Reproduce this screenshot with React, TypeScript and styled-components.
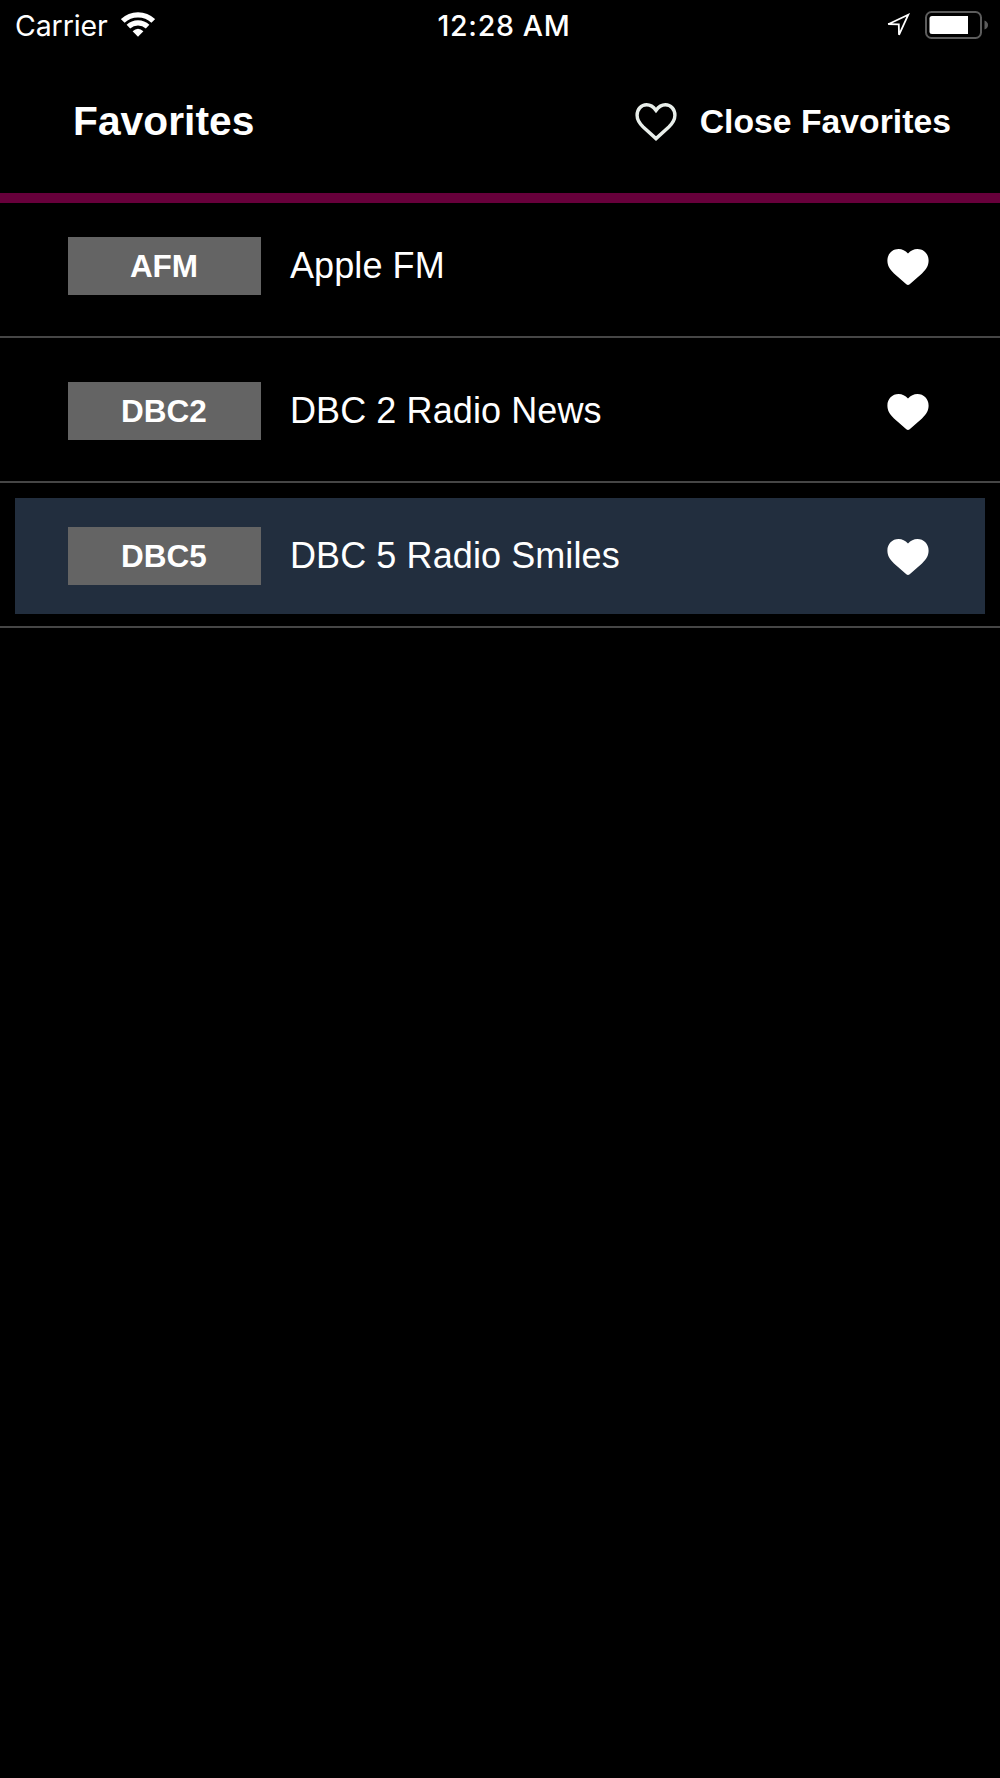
import React from "react";
import styled, { createGlobalStyle } from "styled-components";

const GlobalStyle = createGlobalStyle`
  *, *::before, *::after { box-sizing: border-box; }
  html, body { margin: 0; padding: 0; background: #000; }
`;

const Screen = styled.div`
  display: flex;
  flex-direction: column;
  width: 1000px;
  height: 1778px;
  overflow: hidden;
  background: #000;
  color: #fff;
  font-family: "Liberation Sans", Arial, sans-serif;
`;

const StatusBar = styled.div`
  display: grid;
  grid-template-columns: 1fr auto 1fr;
  align-items: center;
  height: 50px;
  padding: 0 12px 0 15px;
  font-family: Inter, Roboto, sans-serif;
`;

const StatusGroup = styled.div<{ $end?: boolean }>`
  display: flex;
  align-items: center;
  gap: ${(p) => (p.$end ? "14px" : "13px")};
  justify-content: ${(p) => (p.$end ? "flex-end" : "flex-start")};
  svg { display: block; margin-bottom: 2px; }
`;

const Carrier = styled.span`
  width: 93px;
  padding-top: 1px;
  font-size: 28.5px;
  font-weight: 400;
  line-height: 50px;
  letter-spacing: -0.1px;
`;

const Clock = styled.span`
  margin-left: 5px;
  padding-top: 1px;
  font-size: 28.5px;
  font-weight: 500;
  line-height: 50px;
  letter-spacing: 0.7px;
`;

const Header = styled.header`
  position: relative;
  display: flex;
  align-items: center;
  justify-content: space-between;
  height: 153px;
  padding: 0 49px 0 73px;
  border-bottom: 10px solid #67003b;
`;

const Title = styled.h1`
  margin: 0;
  font-size: 40.7px;
  font-weight: 700;
  line-height: 143px;
  letter-spacing: 0.06px;
`;

const CloseButton = styled.button`
  display: flex;
  align-items: center;
  gap: 23px;
  padding: 0;
  border: 0;
  background: none;
  color: inherit;
  font: 700 33.7px/143px "Liberation Sans", Arial, sans-serif;
  letter-spacing: 0.03px;
  svg { display: block; margin-top: 1px; }
`;

const List = styled.ul`
  margin: -10px 0 0;
  padding: 0;
  list-style: none;
`;

const Row = styled.li`
  height: 145px;
  padding: 15px 15px 12px;
  border-bottom: 2px solid #464646;
`;

const RowBody = styled.div<{ $active?: boolean }>`
  display: flex;
  align-items: center;
  height: 116px;
  padding: 0 56px 0 53px;
  background: ${(p) => (p.$active ? "#222e3e" : "transparent")};
  svg { display: block; margin-top: 1px; }
`;

const Badge = styled.span`
  width: 193px;
  height: 58px;
  padding-right: 1px;
  background: #646464;
  font-size: 31.5px;
  font-weight: 700;
  line-height: 58px;
  text-align: center;
`;

const Name = styled.span`
  flex: 1;
  margin-left: 29px;
  font-size: 36px;
  line-height: 58px;
  letter-spacing: 0.09px;
`;

const WifiIcon = () => (
  <svg width="34" height="25" viewBox="0 0 34 25">
    <g fill="none" stroke="#fff" strokeWidth="5.2">
      <path d="M1.8 9A21.8 21.8 0 0 1 32.2 9" />
      <path d="M7.4 14.7A14 14 0 0 1 26.6 14.7" />
    </g>
    <path d="M17 24.7L11.6 19.2Q17 14.2 22.4 19.2Z" fill="#fff" />
  </svg>
);

const LocationIcon = () => (
  <svg width="25" height="24" viewBox="0 0 25 24">
    <path d="M22.2 1.8L2.2 11.2L12.8 11.3L13 21.8Z" fill="none" stroke="#fff" strokeWidth="1.8" />
  </svg>
);

const BatteryIcon = () => (
  <svg width="63" height="28" viewBox="0 0 63 28">
    <rect x="1" y="1" width="55" height="26" rx="5.5" fill="none" stroke="#5c5c5c" strokeWidth="2" />
    <path d="M7 5H43V23H7Q4.5 23 4.5 20.5V7.5Q4.5 5 7 5Z" fill="#fff" />
    <path d="M59.5 9.5Q63 11 63 14T59.5 18.5Z" fill="#5c5c5c" />
  </svg>
);

const HeartOutline = () => (
  <svg width="42" height="38" viewBox="0 0 42 38">
    <path
      d="M21 7.4C18.3 3.6 15.2 1.8 11.6 1.8C6.2 1.8 2.1 6.2 2.1 12.3C2.1 17 4.4 20.4 8.2 24L21 35.6L33.8 24C37.6 20.4 39.9 17 39.9 12.3C39.9 6.2 35.8 1.8 30.4 1.8C26.8 1.8 23.7 3.6 21 7.4Z"
      fill="none"
      stroke="#e8eeea"
      strokeWidth="3.4"
    />
  </svg>
);

const HeartFilled = () => (
  <svg width="42" height="36" viewBox="0 0 42 36">
    <path
      d="M21 4.6C18.3 1.5 15.2 0 11.6 0C5.2 0 .4 4.9 .4 11.5C.4 16.5 2.5 20.3 7 24.4L19.3 35.2Q21 36.6 22.7 35.2L35 24.4C39.5 20.3 41.6 16.5 41.6 11.5C41.6 4.9 36.8 0 30.4 0C26.8 0 23.7 1.5 21 4.6Z"
      fill="#fff"
    />
  </svg>
);

const stations = [
  { code: "AFM", name: "Apple FM" },
  { code: "DBC2", name: "DBC 2 Radio News" },
  { code: "DBC5", name: "DBC 5 Radio Smiles", active: true },
];

export default function App() {
  return (
    <>
      <GlobalStyle />
      <Screen>
        <StatusBar>
          <StatusGroup>
            <Carrier>Carrier</Carrier>
            <WifiIcon />
          </StatusGroup>
          <Clock>12:28 AM</Clock>
          <StatusGroup $end>
            <LocationIcon />
            <BatteryIcon />
          </StatusGroup>
        </StatusBar>
        <Header>
          <Title>Favorites</Title>
          <CloseButton>
            <HeartOutline />
            Close Favorites
          </CloseButton>
        </Header>
        <List>
          {stations.map((s) => (
            <Row key={s.code}>
              <RowBody $active={s.active}>
                <Badge>{s.code}</Badge>
                <Name>{s.name}</Name>
                <HeartFilled />
              </RowBody>
            </Row>
          ))}
        </List>
      </Screen>
    </>
  );
}
